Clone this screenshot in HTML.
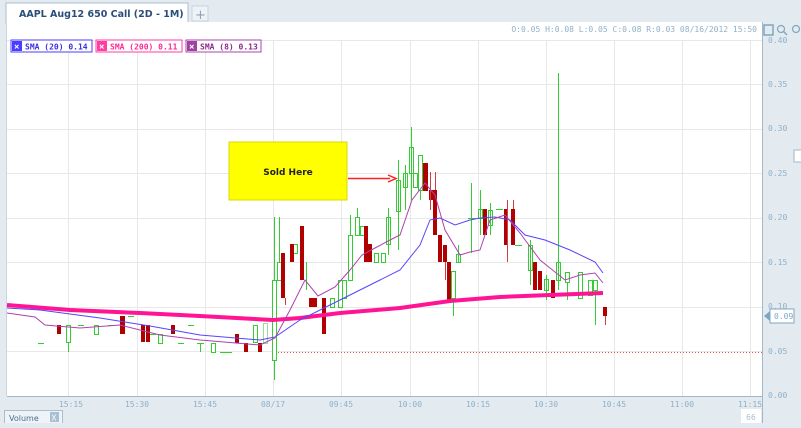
<!DOCTYPE html>
<html><head><meta charset="utf-8"><style>
body{margin:0;width:801px;height:423px;overflow:hidden;background:#e3ebf1;font-family:"Liberation Mono","DejaVu Sans Mono",monospace;}
svg text{font-family:"DejaVu Sans Mono","Liberation Mono",monospace;}
svg text.sans{font-family:"DejaVu Sans","Liberation Sans",sans-serif;}
</style></head><body>
<svg width="801" height="423" viewBox="0 0 801 423" xmlns="http://www.w3.org/2000/svg">
<rect x="0" y="0" width="801" height="423" fill="#e3ebf1"/>
<rect x="6" y="3" width="182" height="20" fill="#fff" stroke="#a9bfcf"/>
<text class="sans" x="19" y="17" font-size="9.5" font-weight="bold" fill="#2b4d7a">AAPL Aug12 650 Call (2D - 1M)</text>
<rect x="192" y="6" width="16" height="15" fill="#eef3f7" stroke="#c4d3de"/>
<text class="sans" x="195" y="19" font-size="13" fill="#8aa4b8">+</text>
<rect x="7" y="22" width="755" height="374" fill="#fff"/>
<line x1="762.5" y1="22" x2="762.5" y2="423" stroke="#9fb8cc"/>
<line x1="7" y1="396.5" x2="762" y2="396.5" stroke="#9fb8cc"/>
<line x1="6.5" y1="22" x2="6.5" y2="396" stroke="#c8d6e0"/>
<g stroke="#e8e8e8" stroke-width="1">
<line x1="7" y1="40.5" x2="762" y2="40.5"/><line x1="7" y1="84.5" x2="762" y2="84.5"/><line x1="7" y1="129.5" x2="762" y2="129.5"/><line x1="7" y1="173.5" x2="762" y2="173.5"/><line x1="7" y1="218.5" x2="762" y2="218.5"/><line x1="7" y1="262.5" x2="762" y2="262.5"/><line x1="7" y1="307.5" x2="762" y2="307.5"/><line x1="7" y1="351.5" x2="762" y2="351.5"/>
<line x1="68.5" y1="40" x2="68.5" y2="396"/><line x1="137.5" y1="40" x2="137.5" y2="396"/><line x1="205.5" y1="40" x2="205.5" y2="396"/><line x1="273.5" y1="40" x2="273.5" y2="396"/><line x1="341.5" y1="40" x2="341.5" y2="396"/><line x1="410.5" y1="40" x2="410.5" y2="396"/><line x1="478.5" y1="40" x2="478.5" y2="396"/><line x1="546.5" y1="40" x2="546.5" y2="396"/><line x1="614.5" y1="40" x2="614.5" y2="396"/><line x1="682.5" y1="40" x2="682.5" y2="396"/><line x1="750.5" y1="40" x2="750.5" y2="396"/>
</g>
<text x="757" y="32" font-size="8" fill="#8fb0c8" text-anchor="end">O:0.05 H:0.08 L:0.05 C:0.08 R:0.03    08/16/2012 15:50</text>
<g font-size="8" font-weight="bold">
<rect x="11" y="40" width="81" height="12" fill="#fff" stroke="#4b3dff"/><rect x="12" y="41" width="10" height="10" fill="#4b3dff"/><text x="14" y="49.5" fill="#fff" font-size="9">×</text><text x="25" y="49.5" fill="#3a2fe0">SMA (20) 0.14</text>
<rect x="96" y="40" width="86" height="12" fill="#fff" stroke="#ff3ea0"/><rect x="97" y="41" width="10" height="10" fill="#ff3ea0"/><text x="99" y="49.5" fill="#fff" font-size="9">×</text><text x="110" y="49.5" fill="#ff2a90">SMA (200) 0.11</text>
<rect x="186" y="40" width="75" height="12" fill="#fff" stroke="#aa44aa"/><rect x="187" y="41" width="10" height="10" fill="#a040a0"/><text x="189" y="49.5" fill="#fff" font-size="9">×</text><text x="200" y="49.5" fill="#8a2a8a">SMA (8) 0.13</text>
</g>
<line x1="275" y1="352.5" x2="762" y2="352.5" stroke="#e05050" stroke-dasharray="1,2"/>
<g stroke="#33cc33" fill="#fff" stroke-width="1">
<line x1="38" y1="343.5" x2="44" y2="343.5"/><rect x="66.5" y="325.5" width="4" height="17"/><line x1="68.5" y1="342" x2="68.5" y2="352"/>
<line x1="78" y1="325.5" x2="84" y2="325.5"/><rect x="94.5" y="325.5" width="4" height="9"/><line x1="108" y1="325.5" x2="114" y2="325.5"/>
<line x1="128" y1="316.5" x2="134" y2="316.5"/><line x1="150" y1="334.5" x2="156" y2="334.5"/><rect x="158.5" y="334.5" width="4" height="9"/>
<line x1="178" y1="343.5" x2="184" y2="343.5"/><line x1="188" y1="325.5" x2="194" y2="325.5"/><line x1="200.5" y1="343" x2="200.5" y2="352"/><line x1="197" y1="343.5" x2="204" y2="343.5"/>
<rect x="211.5" y="343.5" width="4" height="9"/><line x1="220" y1="352.5" x2="232" y2="352.5"/>
<rect x="253.5" y="325.5" width="4" height="17"/><rect x="263.5" y="323.5" width="4" height="20" stroke="#99dd99"/>
<rect x="272.5" y="280.5" width="4" height="80"/><line x1="274.5" y1="217" x2="274.5" y2="280"/><line x1="274.5" y1="360" x2="274.5" y2="380"/>
<rect x="277.5" y="262.5" width="4" height="18"/><line x1="279.5" y1="217" x2="279.5" y2="262"/>
<rect x="293.5" y="244.5" width="4" height="9"/><line x1="306.5" y1="262" x2="306.5" y2="290"/>
<rect x="330.5" y="298.5" width="4" height="9"/><rect x="338.5" y="280.5" width="4" height="27"/><rect x="342.5" y="280.5" width="4" height="18"/>
<rect x="348.5" y="235.5" width="4" height="45"/><line x1="350.5" y1="215" x2="350.5" y2="235"/><rect x="355.5" y="217.5" width="4" height="18"/><line x1="357.5" y1="208" x2="357.5" y2="217"/>
<rect x="360.5" y="226.5" width="4" height="9"/><rect x="374.5" y="253.5" width="4" height="9"/><rect x="381.5" y="253.5" width="4" height="9"/>
<rect x="386.5" y="217.5" width="4" height="27"/><line x1="388.5" y1="208" x2="388.5" y2="255"/>
<rect x="396.5" y="180.5" width="4" height="31"/><line x1="398.5" y1="160" x2="398.5" y2="250"/>
<rect x="403.5" y="173.5" width="4" height="14"/><line x1="405.5" y1="165" x2="405.5" y2="210"/>
<rect x="409.5" y="147.5" width="4" height="26"/><line x1="411.5" y1="127" x2="411.5" y2="200"/>
<rect x="413.5" y="173.5" width="4" height="14"/><rect x="418.5" y="155.5" width="4" height="35"/><line x1="420.5" y1="190" x2="420.5" y2="200"/>
<rect x="451.5" y="271.5" width="4" height="27"/><line x1="453.5" y1="298" x2="453.5" y2="316"/><rect x="456.5" y="254.5" width="4" height="8"/><line x1="458.5" y1="245" x2="458.5" y2="262"/>
<line x1="471.5" y1="183" x2="471.5" y2="253"/><line x1="468" y1="218.5" x2="476" y2="218.5"/>
<rect x="478.5" y="209.5" width="4" height="9"/><line x1="480.5" y1="190" x2="480.5" y2="235"/>
<rect x="488.5" y="210.5" width="4" height="15"/><line x1="490.5" y1="203" x2="490.5" y2="235"/><line x1="496" y1="209.5" x2="503" y2="209.5"/>
<line x1="515" y1="245.5" x2="522" y2="245.5"/>
<rect x="528.5" y="245.5" width="4" height="25"/><line x1="530.5" y1="240" x2="530.5" y2="285"/>
<rect x="544.5" y="279.5" width="4" height="11"/><line x1="546.5" y1="275" x2="546.5" y2="300"/>
<rect x="556.5" y="262.5" width="4" height="18"/><line x1="558.5" y1="73" x2="558.5" y2="290"/>
<rect x="565.5" y="272.5" width="4" height="10"/><line x1="567.5" y1="282" x2="567.5" y2="300"/>
<rect x="578.5" y="272.5" width="4" height="26"/><rect x="588.5" y="280.5" width="4" height="15"/><rect x="593.5" y="280.5" width="4" height="10"/><line x1="595.5" y1="290" x2="595.5" y2="325"/>
</g>
<g fill="#b00000" stroke="none">
<rect x="57" y="325" width="4" height="9"/><rect x="120" y="316" width="5" height="18"/><rect x="141" y="325" width="4" height="17"/><rect x="146" y="325" width="4" height="17"/>
<rect x="171" y="325" width="4" height="9"/><rect x="235" y="334" width="4" height="9"/><rect x="244" y="343" width="4" height="9"/><rect x="258" y="343" width="4" height="9"/>
<rect x="281" y="253" width="4" height="45"/><rect x="290" y="244" width="4" height="18"/><rect x="300" y="226" width="4" height="54"/>
<rect x="309" y="298" width="4" height="9"/><rect x="313" y="298" width="4" height="9"/><rect x="322" y="298" width="4" height="36"/>
<rect x="364" y="226" width="4" height="36"/><rect x="368" y="244" width="4" height="18"/>
<rect x="423" y="163" width="5" height="28"/><rect x="429" y="190" width="4" height="10"/><rect x="433" y="190" width="4" height="45"/>
<rect x="438" y="235" width="4" height="27"/><rect x="443" y="245" width="4" height="17"/><rect x="447" y="262" width="4" height="40"/>
<rect x="483" y="209" width="4" height="26"/><rect x="504" y="209" width="4" height="36"/><rect x="511" y="209" width="4" height="36"/>
<rect x="533" y="262" width="4" height="28"/><rect x="538" y="271" width="4" height="19"/><rect x="551" y="280" width="4" height="18"/><rect x="603" y="307" width="4" height="9"/>
</g>
<g stroke="#d04040"><line x1="430.5" y1="172" x2="430.5" y2="210"/><line x1="435.5" y1="172" x2="435.5" y2="190"/><line x1="445.5" y1="262" x2="445.5" y2="280"/><line x1="507.5" y1="200" x2="507.5" y2="262"/><line x1="513.5" y1="200" x2="513.5" y2="209"/><line x1="605.5" y1="316" x2="605.5" y2="325"/><line x1="285.5" y1="298" x2="285.5" y2="305"/></g>
<polyline fill="none" stroke="#ff1493" stroke-width="4" points="7,305 70,310 140,313 200,316 273,320 300,318 340,313 400,308 450,301 500,297 550,295 603,293"/>
<polyline fill="none" stroke="#5544ff" stroke-width="1" points="7,308 40,310 100,318 150,326 200,335 260,340 275,337 300,320 330,305 360,290 380,280 400,270 420,245 430,220 440,218 455,225 470,220 480,218 495,217 510,220 525,235 545,240 570,250 595,262 603,273"/>
<polyline fill="none" stroke="#b040b0" stroke-width="1" points="7,313 35,317 45,325 80,328 120,325 160,335 200,340 260,345 275,338 290,310 305,280 318,296 335,287 350,270 362,255 375,248 390,240 400,235 412,200 425,183 435,195 445,230 460,255 470,252 480,250 490,220 505,215 520,233 540,260 565,280 580,275 595,273 603,283"/>
<rect x="229" y="142" width="118" height="58" fill="#ffff00" stroke="#d8d800"/>
<text class="sans" x="288" y="175" font-size="9" font-weight="bold" fill="#222" text-anchor="middle">Sold Here</text>
<line x1="348" y1="178.5" x2="390" y2="178.5" stroke="#ff2020" stroke-width="1.5"/>
<path d="M388,175 L396,178.5 L388,182" fill="none" stroke="#ff2020" stroke-width="1.5"/>
<g font-size="8" fill="#8fb0c8">
<text x="768" y="43">0.40</text><text x="768" y="87">0.35</text><text x="768" y="131">0.30</text><text x="768" y="176">0.25</text><text x="768" y="220">0.20</text><text x="768" y="265">0.15</text><text x="768" y="309">0.10</text><text x="768" y="354">0.05</text><text x="768" y="398">0.00</text>
</g>
<rect x="770" y="309" width="24" height="14" fill="#fff" stroke="#7fa6c0"/><path d="M770,311 L764,316 L770,321 Z" fill="#7fa6c0"/>
<text x="774" y="319" font-size="8" fill="#7fa6c0">0.09</text>
<rect x="794" y="150" width="8" height="12" fill="#fff" stroke="#9fb8cc"/>
<rect x="764" y="25" width="9" height="10" fill="none" stroke="#7fa6c0" stroke-width="1.5"/>
<circle cx="781" cy="29" r="3.5" fill="none" stroke="#7fa6c0" stroke-width="1.2"/><line x1="783.5" y1="31.5" x2="787" y2="35" stroke="#7fa6c0" stroke-width="1.5"/>
<circle cx="796" cy="29" r="3.5" fill="none" stroke="#7fa6c0" stroke-width="1.2"/>
<g font-size="8" fill="#8fb0c8" text-anchor="middle">
<text x="71" y="407">15:15</text><text x="137" y="407">15:30</text><text x="205" y="407">15:45</text><text x="273" y="407">08/17</text><text x="341" y="407">09:45</text><text x="410" y="407">10:00</text><text x="478" y="407">10:15</text><text x="546" y="407">10:30</text><text x="614" y="407">10:45</text><text x="682" y="407">11:00</text><text x="750" y="407">11:15</text>
</g>
<rect x="4.5" y="410.5" width="58" height="14" fill="#eef3f7" stroke="#a9bfcf"/>
<text class="sans" x="9" y="421" font-size="8" fill="#4a6f8f">Volume</text>
<rect x="50" y="412" width="9" height="10" fill="#a9bfcf"/><text x="51.5" y="420.5" font-size="8" fill="#fff">X</text>
<rect x="741" y="409" width="20" height="14" fill="#fff"/><text x="751" y="420" font-size="8" fill="#a9bfcf" text-anchor="middle">66</text>
</svg>
</body></html>
